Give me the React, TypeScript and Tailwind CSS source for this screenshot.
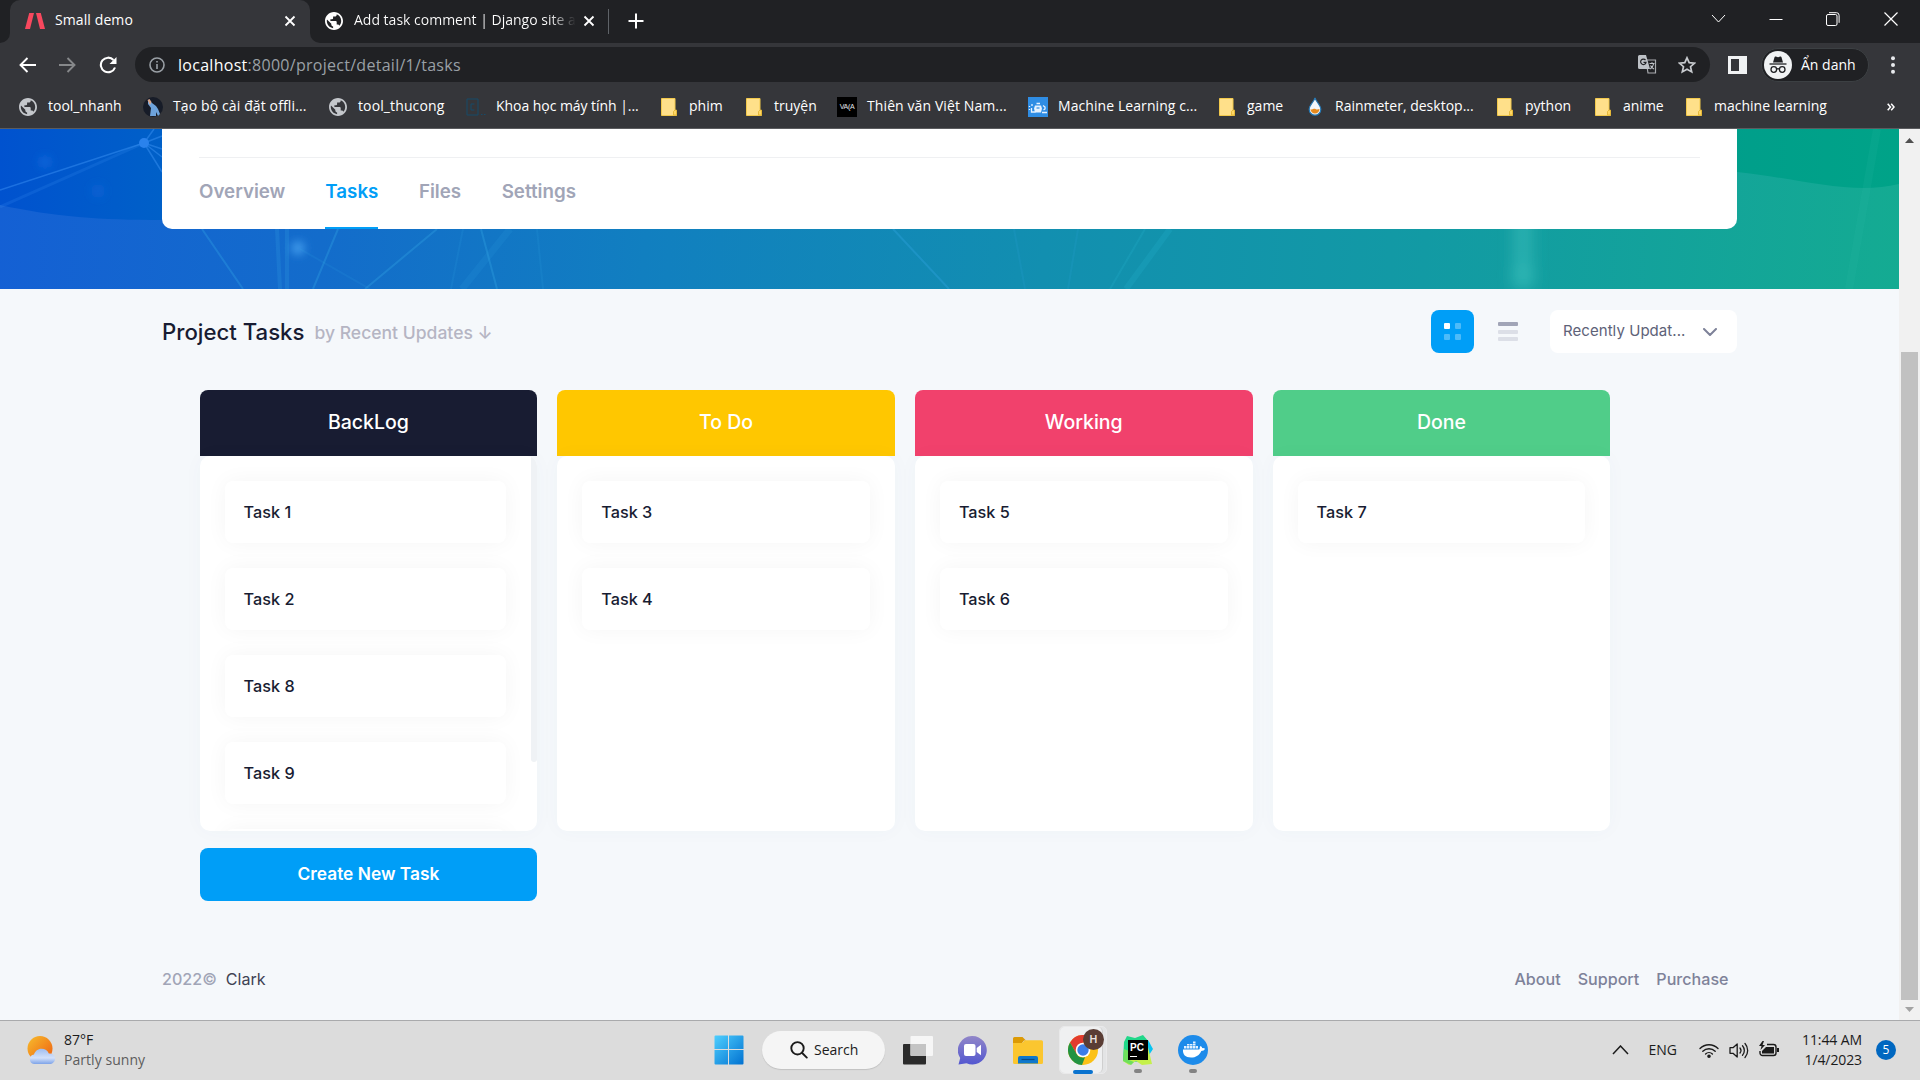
import React from "react";

const UI = "font-['Open_Sans','Noto_Sans',sans-serif]";

/* ---------- favicons ---------- */

const Globe = ({ color }: { color: string }) => (
  <svg width="18" height="18" viewBox="2 2 20 20">
    <path
      d="M12 2C6.480 2 2 6.480 2 12s4.480 10 10 10 10-4.480 10-10S17.520 2 12 2zm-1 17.930c-3.950-.49-7-3.850-7-7.930 0-.62.080-1.210.210-1.790L9 15v1c0 1.100.9 2 2 2v1.930zm6.900-2.540c-.26-.81-1-1.390-1.900-1.390h-1v-3c0-.55-.45-1-1-1H8v-2h2c.55 0 1-.45 1-1V7h2c1.100 0 2-.9 2-2v-.41c2.930 1.190 5 4.060 5 7.410 0 2.080-.8 3.970-2.100 5.390z"
      fill={color}
    />
  </svg>
);

const Folder = () => (
  <svg width="18" height="20" viewBox="0 0 18 20">
    <path d="M1.500 1.500h13.500v12h1.500v5h-15z" fill="#ffe08a" stroke="#f2c94c" />
    <path d="M13.500 18v-3.500l1.500-1.500h1.500v5z" fill="#ffd766" stroke="#e0b12f" strokeWidth=".8" />
  </svg>
);

const Person = () => (
  <svg width="20" height="20" viewBox="0 0 20 20">
    <rect width="20" height="20" rx="10" fill="#171c28" />
    <path d="M5 4l2 0 2 2 4 3 2 3 2 5-2 2-2-4v4H7l1-8-3-4z" fill="#6ea3dc" />
    <path d="M4.500 3l2-1 2 3-1.500 3z" fill="#d9a78c" />
  </svg>
);

const Computer = () => (
  <svg width="20" height="20" viewBox="0 0 20 20" fill="none" stroke="#174a68">
    <path d="M1 2h11v16H1zM8.500 7H5v6h3.500" />
    <path d="M15 17.500h1.500M18 17.500h1.500" />
  </svg>
);

const Vaca = () => (
  <span className="flex size-5 items-center justify-center bg-black font-['Liberation_Sans',sans-serif] text-[7px] tracking-tighter text-gray-200">
    VA(A
  </span>
);

const Learning = () => (
  <svg width="20" height="20" viewBox="0 0 20 20">
    <rect width="20" height="20" fill="#2f8de4" />
    <path d="M1.500 9v1M1.500 12v1M4 7v2M3.500 11v4h4M8.500 6.500h3.500M15 8.500l2 1.500v2l-1.500 1M14 15.500h5" stroke="#e6f2ff" strokeWidth="1.300" fill="none" />
    <path d="M7 8.500h6l1 3-1 4H7l-1-4z" fill="#e6f2ff" />
    <path d="M8.500 11h3" stroke="#2f8de4" strokeWidth="1.200" />
  </svg>
);

const Drop = () => (
  <svg width="14" height="19" viewBox="0 0 14 19">
    <path d="M7 .8c1 4 5.800 7.200 5.800 11.600a5.800 5.800 0 0 1-11.600 0C1.200 8 6 4.800 7 .8z" fill="#f3f7fb" stroke="#2477b3" strokeWidth="1.200" />
    <path d="M2.500 12c2 1.500 3-1 5 0s2.500.3 4 0a4.500 4.500 0 0 1-9 0z" fill="#e68a1e" />
  </svg>
);

/* ---------- browser chrome ---------- */

const CloseX = () => (
  <svg width="12" height="12" viewBox="0 0 12 12" stroke="#fff" strokeWidth="1.800">
    <path d="M1.500 1.500l9 9M10.500 1.500l-9 9" />
  </svg>
);

function TabStrip() {
  return (
    <div className="flex h-[43px] bg-[#202124]">
      <div className="flex w-2.5 items-end bg-[#35363a]">
        <div className="h-full w-2.5 rounded-br-[10px] bg-[#202124]" />
      </div>
      <div className="flex w-[300px] items-center rounded-t-[10px] bg-[#35363a] pr-3.5 pb-px pl-[15px]">
        <svg width="20" height="16" viewBox="0 0 20 16" fill="#f8485e">
          <path d="M4.200 0H9L5 16H0z" />
          <path d="M11 0h4.800L20 16h-5z" />
        </svg>
        <span className="-mt-0.5 ml-[10px] text-sm tracking-[0.1px] text-white">Small demo</span>
        <span className="ml-auto">
          <CloseX />
        </span>
      </div>
      <div className="bg-[#35363a]">
        <div className="h-[43px] w-2.5 rounded-bl-[10px] bg-[#202124]" />
      </div>
      <div className="flex w-[289px] items-center pb-px pl-[5px]">
        <Globe color="#fff" />
        <div className="-mt-0.5 ml-[11px] w-[222px] overflow-hidden bg-linear-to-r from-white from-88% to-transparent to-100% bg-clip-text text-sm whitespace-nowrap text-transparent">
          Add task comment | Django site admin
        </div>
        <span className="ml-[7px]">
          <CloseX />
        </span>
      </div>
      <div className="mt-[9px] -ml-px h-[25px] w-px bg-[#5f6368]" />
      <svg className="mt-[13px] ml-[19px]" width="16" height="16" viewBox="0 0 16 16" stroke="#fff" strokeWidth="2">
        <path d="M8 .5v15M.5 8h15" />
      </svg>
      <div className="mr-[21px] ml-auto flex h-[37px] items-center gap-[43px] text-white">
        <svg width="15" height="15" viewBox="0 0 15 15" fill="none" stroke="currentColor">
          <path d="M1 4l6.500 7L14 4" />
        </svg>
        <svg width="14" height="14" viewBox="0 0 14 14" stroke="currentColor">
          <path d="M.5 7.500h13" />
        </svg>
        <svg width="14" height="14" viewBox="0 0 14 14" fill="none" stroke="currentColor">
          <rect x=".5" y="2.500" width="10.500" height="11" rx="1.500" />
          <path d="M3 .7h7.500a2.600 2.600 0 0 1 2.600 2.600v7.500" />
        </svg>
        <svg width="16" height="16" viewBox="0 0 16 16" stroke="currentColor" strokeWidth="1.200">
          <path d="M1.500 1.500l13 13M14.500 1.500l-13 13" />
        </svg>
      </div>
    </div>
  );
}

function Toolbar() {
  return (
    <div className="flex h-[43px] items-center bg-[#35363a] pl-[19px]">
      <svg width="17" height="16" viewBox="0 0 17 16" fill="none" stroke="#fff" strokeWidth="1.900">
        <path d="M17 8H1.500M8.500 1L1.500 8l7 7" />
      </svg>
      <svg className="ml-[23px]" width="17" height="16" viewBox="0 0 17 16" fill="none" stroke="#86888a" strokeWidth="1.900">
        <path d="M0 8h15.500M8.500 1l7 7-7 7" />
      </svg>
      <svg className="ml-[23px]" width="18" height="18" viewBox="0 0 18 18" fill="none" stroke="#fff" strokeWidth="2.100">
        <path d="M16 11.500A7.300 7.300 0 1 1 14.500 4" />
        <path d="M17.500 1v7h-7z" fill="#fff" stroke="none" />
      </svg>
      <div className="ml-[18px] flex h-[35px] w-[1575px] items-center rounded-full bg-[#202124] pr-3.5 pl-[14px]">
        <svg width="16" height="16" viewBox="0 0 16 16" fill="none" stroke="#9aa0a6" strokeWidth="1.600">
          <circle cx="8" cy="8" r="7" />
          <path d="M8 7v5M8 4v1.600" />
        </svg>
        <span className="ml-[13px] text-[16px] tracking-[0.28px] text-[#9aa0a6]">
          <span className="text-white">localhost</span>:8000/project/detail/1/tasks
        </span>
        <div className="ml-auto flex items-center gap-[21px]">
          <svg width="19" height="19" viewBox="0 0 19 19">
            <path d="M8 5h9.500v13H10z" fill="none" stroke="#a9acb0" strokeWidth="1.200" />
            <path d="M1.500 0H8l4 14H1.500A1.500 1.500 0 0 1 0 12.500v-11A1.500 1.500 0 0 1 1.500 0z" fill="#bdc1c6" />
            <path d="M7.500 5.200A2.700 2.700 0 1 0 8 7.300H5.500" fill="none" stroke="#202124" strokeWidth="1.200" />
            <path d="M11.500 8.500h5M14 7.300v1.200M15.700 8.500c-.4 2.500-2 4.500-3.500 5.500M12.500 10.500c.8 1.600 2 2.800 3.500 3.500" fill="none" stroke="#bdc1c6" strokeWidth="1.100" />
          </svg>
          <svg width="18" height="18" viewBox="0 0 18 18" fill="none" stroke="#c8cbcf" strokeWidth="1.700">
            <path d="M9 1.800l2.200 4.900 5.300.5-4 3.500 1.200 5.200L9 13.200l-4.700 2.700 1.200-5.200-4-3.500 5.300-.5z" />
          </svg>
        </div>
      </div>
      <svg className="ml-[18px]" width="19" height="18" viewBox="0 0 19 18">
        <path d="M0 0h19v18H0zM3 3v12h8V3z" fill="#f1f3f4" fillRule="evenodd" />
      </svg>
      <div className="ml-[14px] flex h-[34px] w-[108px] items-center rounded-full border border-[#3c4043] bg-[#202124] pl-0.5">
        <svg width="28" height="28" viewBox="0 0 28 28">
          <circle cx="14" cy="14" r="14" fill="#f1f3f4" />
          <path d="M9 11.500l1.500-5.300c.2-.6.700-.8 1.300-.6l2.200.6 2.200-.6c.6-.2 1.100 0 1.300.6l1.500 5.300z" fill="#202124" />
          <path d="M5.500 13h17" stroke="#202124" strokeWidth="1.300" />
          <g fill="none" stroke="#202124" strokeWidth="1.300">
            <circle cx="9.800" cy="18.500" r="2.800" />
            <circle cx="18.200" cy="18.500" r="2.800" />
            <path d="M12.600 18.200q1.400-1 2.800 0" />
          </g>
        </svg>
        <span className="ml-[9px] text-sm text-white">Ẩn danh</span>
      </div>
      <svg className="ml-[22px]" width="4" height="18" viewBox="0 0 4 18" fill="#e8eaed">
        <circle cx="2" cy="2.300" r="2" />
        <circle cx="2" cy="9" r="2" />
        <circle cx="2" cy="15.700" r="2" />
      </svg>
    </div>
  );
}

const bookmarks: { label: string; icon: React.ReactNode; width: string }[] = [
  { label: "tool_nhanh", icon: <Globe color="#c4c7cb" />, width: "w-[125px]" },
  { label: "Tạo bộ cài đặt offli...", icon: <Person />, width: "w-[185px] tracking-[0.12px]" },
  { label: "tool_thucong", icon: <Globe color="#c4c7cb" />, width: "w-[138px] tracking-[0.12px]" },
  { label: "Khoa học máy tính |...", icon: <Computer />, width: "w-[193px] -tracking-[0.05px]" },
  { label: "phim", icon: <Folder />, width: "w-[85px]" },
  { label: "truyện", icon: <Folder />, width: "w-[93px]" },
  { label: "Thiên văn Việt Nam...", icon: <Vaca />, width: "w-[191px] tracking-[0.1px]" },
  { label: "Machine Learning c...", icon: <Learning />, width: "w-[189px] tracking-[0.08px]" },
  { label: "game", icon: <Folder />, width: "w-[88px]" },
  { label: "Rainmeter, desktop...", icon: <Drop />, width: "w-[190px]" },
  { label: "python", icon: <Folder />, width: "w-[98px]" },
  { label: "anime", icon: <Folder />, width: "w-[91px]" },
  { label: "machine learning", icon: <Folder />, width: "w-[150px]" },
];

function BookmarksBar() {
  return (
    <div className="flex h-[43px] items-center border-b border-[#5b5c5f] bg-[#35363a] pb-px pl-[18px] text-sm text-white">
      {bookmarks.map((b) => (
        <div key={b.label} className={`${b.width} flex shrink-0 items-center whitespace-nowrap`}>
          <span className="flex w-5 justify-center">{b.icon}</span>
          <span className="-mt-0.5 ml-[10px]">{b.label}</span>
        </div>
      ))}
      <svg className="mr-[25px] ml-auto" width="8" height="8" viewBox="0 0 8 8" fill="none" stroke="#fff" strokeWidth="1.500">
        <path d="M.7.700L3.500 4 .7 7.300M4.200.700L7 4 4.200 7.300" />
      </svg>
    </div>
  );
}

/* ---------- page ---------- */

const BannerArt = () => (
  <svg className="absolute inset-0" width="1899" height="160" viewBox="0 0 1899 160" fill="none">
    <defs>
      <linearGradient id="top" x1="0" x2="1899" y1="0" y2="0" gradientUnits="userSpaceOnUse">
        <stop offset="0" stopColor="#0052cf" />
        <stop offset=".085" stopColor="#0060c8" />
        <stop offset=".75" stopColor="#00968f" />
        <stop offset="1" stopColor="#00a388" />
      </linearGradient>
      <linearGradient id="low" x1="0" x2="1899" y1="60" y2="160" gradientUnits="userSpaceOnUse">
        <stop offset="0" stopColor="#1460d4" />
        <stop offset=".17" stopColor="#136ccb" />
        <stop offset=".34" stopColor="#117fc0" />
        <stop offset=".55" stopColor="#128fb0" />
        <stop offset=".75" stopColor="#129aa4" />
        <stop offset="1" stopColor="#14ab92" />
      </linearGradient>
      <filter id="soft" x="-50%" y="-50%" width="200%" height="200%" filterUnits="objectBoundingBox">
        <feGaussianBlur stdDeviation="4" />
      </filter>
      <filter id="haze" x="1470" y="60" width="110" height="100" filterUnits="userSpaceOnUse">
        <feGaussianBlur stdDeviation="7" />
      </filter>
    </defs>
    <path d="M0 0h1899v160H0z" fill="url(#top)" />
    <path d="M0 76c55 12 100 15 162 15h1575V43c60 6 115 24 162 12v105H0z" fill="url(#low)" />
    <g stroke="#4aa0ff" strokeOpacity=".38" strokeWidth="1.500">
      <path d="M0 61L144 14M144 14l10-14M144 14l18-7M144 14l18 6M144 14l18 14M144 14l18 29" />
      <path d="M0 78L144 14" strokeOpacity=".15" strokeWidth="3" />
    </g>
    <circle cx="144" cy="14" r="5" fill="#2a82ec" />
    <g filter="url(#soft)">
      <circle cx="45" cy="33" r="6" fill="#1b74e6" fillOpacity=".55" />
      <circle cx="98" cy="62" r="7" fill="#1268dc" fillOpacity=".45" />
      <circle cx="298" cy="119" r="7" fill="#47a0ee" fillOpacity=".85" />
    </g>
    <g filter="url(#haze)">
      <path d="M1523 70v90" stroke="#3cc0bd" strokeOpacity=".5" strokeWidth="20" />
      <circle cx="1523" cy="146" r="12" fill="#3cc0bd" fillOpacity=".3" />
    </g>
    <g stroke="#35a8e6" strokeOpacity=".32" strokeWidth="2">
      <path d="M202 100l41 60M437 100l-72 60M338 100l-25 60" />
      <path d="M277 100l3 60M287 100v60" strokeOpacity=".2" strokeWidth="4" />
      <path d="M481 100l16 60M893 100l56 60" />
      <path d="M510 100l-48 60" strokeOpacity=".13" strokeWidth="7" />
      <path d="M1014 100l11 60M1078 100l-10 60M463 100l-12 60M537 100l6 60M300 120l70 40" strokeOpacity=".13" />
    </g>
    <g stroke="#22b0cc" strokeOpacity=".25">
      <path d="M1145 100l-35 60" strokeWidth="2" />
      <path d="M1170 100l-44 60" strokeWidth="6" />
      <path d="M1877 0l-28 160" strokeWidth="8" stroke="#3ac4b0" strokeOpacity=".1" />
    </g>
  </svg>
);

function ProjectHeader() {
  return (
    <div className="relative h-[160px] pl-[162px]">
      <BannerArt />
      <div className="relative h-[100px] w-[1575px] rounded-b-[10px] bg-white px-[37px] pt-7">
        <div className="flex h-[72px] border-t border-[#eff0f2] text-[18.750px] font-semibold text-[#a1a5b7]">
          <span className="flex items-center pb-0.5">Overview</span>
          <span className="ml-[40px] flex items-center border-b-2 border-[#009ef7] text-[#009ef7]">Tasks</span>
          <span className="ml-[40.500px] flex items-center pb-0.5">Files</span>
          <span className="ml-[40.500px] flex items-center pb-0.5">Settings</span>
        </div>
      </div>
    </div>
  );
}

function TitleRow() {
  return (
    <div className="mt-[21px] flex h-[43px] items-center">
      <h2 className="text-[22.200px] font-medium text-[#181c32]">Project Tasks</h2>
      <span className="mt-[3px] ml-[10px] text-[17.550px] font-medium text-[#b5b5c3]">by Recent Updates ↓</span>
      <div className="ml-auto flex size-[43px] items-center justify-center rounded-[8px] bg-[#009ef7]">
        <div className="grid grid-cols-2 gap-[5px]">
          <i className="size-1.5 rounded-[1px] bg-white" />
          <i className="size-1.5 rounded-[1px] bg-white/30" />
          <i className="size-1.5 rounded-[1px] bg-white/30" />
          <i className="size-1.5 rounded-[1px] bg-white/30" />
        </div>
      </div>
      <div className="ml-6 flex w-5 flex-col gap-[3.5px]">
        <i className="h-1 rounded-[1px] bg-[#a1a5b7]" />
        <i className="h-1 rounded-[1px] bg-[#dcdfe7]" />
        <i className="h-1 rounded-[1px] bg-[#dcdfe7]" />
      </div>
      <div className="ml-8 flex h-[43px] w-[187px] items-center rounded-[8px] bg-white pr-5 pl-[13px] text-[15px] text-[#5e6278]">
        <span className="-mt-px tracking-[0.06px]">Recently Updat...</span>
        <svg className="ml-auto" width="14" height="8" viewBox="0 0 14 8" fill="none" stroke="#7e8299" strokeWidth="2" strokeLinecap="round" strokeLinejoin="round">
          <path d="M1 1l6 6 6-6" />
        </svg>
      </div>
    </div>
  );
}

const columns = [
  { title: "BackLog", color: "bg-[#181c32]", tasks: ["Task 1", "Task 2", "Task 8", "Task 9"], scroll: true },
  { title: "To Do", color: "bg-[#ffc700]", tasks: ["Task 3", "Task 4"], scroll: false },
  { title: "Working", color: "bg-[#f1416c]", tasks: ["Task 5", "Task 6"], scroll: false },
  { title: "Done", color: "bg-[#50cd89]", tasks: ["Task 7"], scroll: false },
];

const TASK_CARD =
  "flex h-[62px] shrink-0 items-center rounded-[8px] bg-white pl-[19px] text-[16.25px] font-medium text-[#181c32] shadow-[0_0_22px_0_rgba(0,0,0,0.045)]";

function Board() {
  return (
    <div className="mt-[37px] ml-[37.600px] grid w-[1410.700px] grid-cols-4 gap-x-5">
      {columns.map((c) => (
        <section key={c.title}>
          <h3 className={`${c.color} flex h-[66px] items-center justify-center rounded-t-[8px] text-[19.500px] font-medium text-white`}>
            {c.title}
          </h3>
          <div className="flex h-[375px] overflow-hidden rounded-[10px] bg-white shadow-[0_0_20px_0_rgba(76,87,125,0.03)]">
            <div className={`flex grow flex-col gap-[25px] px-[25px] pt-[25px]`}>
              {c.tasks.map((t) => (
                <div key={t} className={TASK_CARD}>
                  {t}
                </div>
              ))}
              {c.scroll && <div className={TASK_CARD} />}
            </div>
            {c.scroll && <div className="h-[306px] w-1.5 shrink-0 rounded-b-[3px] bg-[#eff2f5]" />}
          </div>
        </section>
      ))}
      <button className="mt-[17px] h-[53px] rounded-[8px] bg-[#009ef7] pb-px text-[17.350px] font-semibold text-white">
        Create New Task
      </button>
    </div>
  );
}

function Footer() {
  return (
    <footer className="mt-auto mb-[31px] flex h-5 items-center text-[16.100px] font-medium text-[#7e8299]">
      <span className="text-[#a1a5b7]">2022©</span>
      <span className="ml-[9px] font-normal text-[#3f4254]">Clark</span>
      <span className="ml-auto">About</span>
      <span className="ml-[17px]">Support</span>
      <span className="mr-[8.500px] ml-[17px]">Purchase</span>
    </footer>
  );
}

function PageScrollbar() {
  return (
    <div className="flex w-[21px] flex-col items-center bg-[#f1f1f1]">
      <svg className="mt-[9px]" width="9" height="5" viewBox="0 0 9 5" fill="#505050">
        <path d="M4.500 0L9 5H0z" />
      </svg>
      <div className="mt-[209px] h-[648px] w-[17px] bg-[#c1c1c1]" />
      <svg className="mt-[7px]" width="9" height="5" viewBox="0 0 9 5" fill="#a3a3a3">
        <path d="M4.500 5L9 0H0z" />
      </svg>
    </div>
  );
}

/* ---------- taskbar ---------- */

const Weather = () => (
  <svg width="28" height="28" viewBox="0 0 28 28">
    <defs>
      <linearGradient id="sun" x1="0" y1="0" x2="1" y2="1">
        <stop offset="0" stopColor="#f7bd2d" />
        <stop offset="1" stopColor="#ee5d10" />
      </linearGradient>
      <linearGradient id="cloud" x1="0" y1="0" x2="0" y2="1">
        <stop offset="0" stopColor="#9fbdf0" />
        <stop offset=".6" stopColor="#d3e1fa" />
        <stop offset="1" stopColor="#7ea3e8" />
      </linearGradient>
    </defs>
    <circle cx="13" cy="12.500" r="12.500" fill="url(#sun)" />
    <path d="M7 28a4.800 4.800 0 0 1 0-9.500C8 15 11 12.700 14.500 12.700s6.300 2 7.300 4.800c3.500-.2 6.200 2 6.200 5.200S25.500 28 22.500 28z" fill="url(#cloud)" />
  </svg>
);

const WindowsLogo = () => (
  <svg width="30" height="30" viewBox="0 0 30 30">
    <defs>
      <linearGradient id="win" x1="0" y1="0" x2="30" y2="30" gradientUnits="userSpaceOnUse">
        <stop offset="0" stopColor="#4fd0ff" />
        <stop offset="1" stopColor="#0070d0" />
      </linearGradient>
    </defs>
    <path d="M1.500.5H14V14H.5V1.500a1 1 0 0 1 1-1zM15 .5h13.500a1 1 0 0 1 1 1V14H15zM.5 15H14v14.500H1.500a1 1 0 0 1-1-1zM15 15h14.500v13.500a1 1 0 0 1-1 1H15z" fill="url(#win)" />
  </svg>
);

const TaskView = () => (
  <svg width="30" height="29" viewBox="0 0 30 29">
    <rect x="0" y="8" width="23" height="20.500" rx="1" fill="#2b2b2b" />
    <rect x="7.500" y="0" width="22.500" height="20" rx="1" fill="#f6f6f6" />
    <path d="M7.500 8H23v12H8.500a1 1 0 0 1-1-1z" fill="#c4c4c4" />
  </svg>
);

const Chat = () => (
  <svg width="29" height="29" viewBox="0 0 29 29">
    <defs>
      <linearGradient id="chat" x1="0" y1="0" x2="0" y2="1">
        <stop offset="0" stopColor="#9186c8" />
        <stop offset="1" stopColor="#5357d0" />
      </linearGradient>
    </defs>
    <path d="M14.500 0a14.300 14.300 0 1 1-6 27.300L.5 28.500 2.200 22A14.300 14.300 0 0 1 14.500 0z" fill="url(#chat)" />
    <rect x="6" y="8" width="11.500" height="12" rx="2" fill="#fff" />
    <path d="M18.700 12l4.300-3.200v10.400L18.700 16z" fill="#fff" />
  </svg>
);

const Explorer = () => (
  <svg width="30" height="27" viewBox="0 0 30 27">
    <path d="M0 1.500A1.500 1.500 0 0 1 1.500 0h8L13 3.500h-2L9 6H0z" fill="#dc9a06" />
    <path d="M0 6h9l3-2.800h16.500A1.500 1.500 0 0 1 30 4.700v20.800a1.500 1.500 0 0 1-1.500 1.500h-27A1.500 1.500 0 0 1 0 25.500z" fill="#fbc62f" />
    <path d="M5 26.500V21a2 2 0 0 1 2-2h16a2 2 0 0 1 2 2v5.500z" fill="#0f78cc" />
    <path d="M8.500 22.500h13" stroke="#0a4b86" strokeWidth="1.200" />
  </svg>
);

const Chrome = () => (
  <svg width="30" height="30" viewBox="0 0 30 30">
    <circle cx="15" cy="15" r="15" fill="#fbc116" />
    <path d="M2 7.500A15 15 0 0 1 28 7.500H15L8.500 18.700z" fill="#e33b2e" />
    <path d="M2 7.500l6.500 11.200A7.500 7.500 0 0 0 17 22.200L14 30A15 15 0 0 1 2 7.500z" fill="#229342" />
    <circle cx="15" cy="15" r="7.300" fill="#fff" />
    <circle cx="15" cy="15" r="5.700" fill="#3b7de8" />
  </svg>
);

const PyCharm = () => (
  <div className="relative flex size-[30px] items-center justify-center">
    <svg className="absolute inset-0" width="30" height="30" viewBox="0 0 30 30">
      <path d="M1 7l3-6 8 2 8-3 6 7 3 8-10 12L0 26z" fill="#21d789" />
      <path d="M25 5l5 9-4 6-3-6z" fill="#07c3f2" />
      <path d="M0 26l6-8 19-6 4 17-10 1-6-4-7 4z" fill="#c5f04a" />
      <path d="M0 26l1-12 5 2v9l5 2-3 3z" fill="#6fe05c" />
    </svg>
    <div className="relative flex size-5 flex-col bg-black pt-[3px] pl-[2px] font-['Liberation_Sans',sans-serif] text-[10px] leading-[9px] font-bold text-white">
      PC
      <i className="mt-[4px] h-px w-[7px] bg-white" />
    </div>
  </div>
);

const Docker = () => (
  <svg width="30" height="30" viewBox="0 0 30 30">
    <circle cx="15" cy="15" r="15" fill="#1d8bea" />
    <path d="M5 14.500h15.500c1 0 1.500-.5 1.300-2.500l.8-1c1 .6 1.500 1.300 1.600 2.200 1-.2 2 0 2.800.5-.6 1.600-2 2.200-3.700 2.200C21.500 20 18 22.500 13 22.500c-5.500 0-8.500-3-8-8z" fill="#fff" />
    <path d="M6 11h2.500v2.500H6zM9 11h2.500v2.500H9zM12 11h2.500v2.500H12zM15 11h2.500v2.500H15zM9 9h2.500v1.600H9zM12 9h2.500v1.600H12zM15 9h2.500v1.600H15zM15 6.600h2.500v1.800H15zM18 11h2v2.500h-2z" fill="#e4f1ff" />
  </svg>
);

const Dot = () => <i className="absolute -bottom-[8px] left-[11px] h-1 w-2 rounded-full bg-[#838383]" />;

function Taskbar() {
  return (
    <div className="flex h-[60px] items-center border-t border-[#a9aaac] bg-[#dcdcdc] pb-px pl-[27px] text-sm text-[#1b1b1b]">
      <Weather />
      <div className="-mt-px ml-[9px] w-[650px] leading-5">
        <div>87°F</div>
        <div className="tracking-[0.05px] text-[#5d5d5d]">Partly sunny</div>
      </div>
      <WindowsLogo />
      <div className="ml-[18px] flex h-[38px] w-[123px] items-center rounded-full bg-[#f5f5f5] pl-[28px] shadow-[0_1px_1px_rgba(0,0,0,0.12)]">
        <svg width="18" height="18" viewBox="0 0 18 18" fill="none" stroke="#1b1b1b" strokeWidth="1.900" strokeLinecap="round">
          <circle cx="7.500" cy="7.300" r="6.200" />
          <path d="M12.200 12l4.600 4.600" />
        </svg>
        <span className="ml-1.5">Search</span>
      </div>
      <span className="ml-[18px]"><TaskView /></span>
      <span className="ml-[25px]"><Chat /></span>
      <span className="ml-[26px]"><Explorer /></span>
      <div className="ml-4 flex h-12 w-12 rounded-[5px] border border-[#e9e9ea] bg-[#e3e4e5]">
        <div className="relative flex h-full w-[43px] items-center justify-center rounded-[5px] border-r border-[#cfcfcf] bg-[#eff0f1]">
          <span className="ml-[4px]"><Chrome /></span>
          <span className="absolute top-0.5 left-[23px] flex size-[21px] items-center justify-center rounded-full bg-[#5a3d35] font-['Roboto',sans-serif] text-[11px] font-medium text-[#ece4e1]">
            H
          </span>
          <i className="absolute -bottom-px left-[13px] h-1 w-5 rounded-full bg-[#0a73cf]" />
        </div>
      </div>
      <span className="relative ml-4"><PyCharm /><Dot /></span>
      <span className="relative ml-[25px]"><Docker /><Dot /></span>
      <div className="mr-6 ml-auto flex items-center">
        <svg width="17" height="10" viewBox="0 0 17 10" fill="none" stroke="#1b1b1b" strokeWidth="1.500">
          <path d="M1 9l7.500-8L16 9" />
        </svg>
        <span className="ml-5">ENG</span>
        <svg className="ml-[22px]" width="20" height="15" viewBox="0 0 20 15" fill="none" stroke="#1b1b1b" strokeWidth="1.400" strokeLinecap="round">
          <path d="M1 5.500a12.700 12.700 0 0 1 18 0M3.800 8.300a8.800 8.800 0 0 1 12.400 0M6.600 11a4.900 4.900 0 0 1 6.800 0" />
          <circle cx="10" cy="13.200" r="1.100" fill="#1b1b1b" />
        </svg>
        <svg className="ml-2.5" width="20" height="17" viewBox="0 0 20 17" fill="none" stroke="#1b1b1b" strokeWidth="1.300" strokeLinecap="round" strokeLinejoin="round">
          <path d="M1 5.700h3L8.200 2v13L4 11.300H1z" />
          <path d="M11 6a4 4 0 0 1 0 5M13.500 3.700a7.200 7.200 0 0 1 0 9.600M16 1.500a10.500 10.500 0 0 1 0 14" />
        </svg>
        <svg className="-mt-0.5 ml-2.5" width="20" height="16" viewBox="0 0 20 16" fill="none" stroke="#1b1b1b" strokeWidth="1.400">
          <path d="M8 3.500h6.500a2.500 2.500 0 0 1 2.500 2.500v6a2.500 2.500 0 0 1-2.500 2.500h-11A2.500 2.500 0 0 1 1 12v-2" />
          <path d="M3 12.500V10l4-4h8v6.500zM18 7h2v4h-2zM3.500 0L0 5h2.500L1.500 9 6 4H3.500L5 0z" fill="#1b1b1b" stroke="none" />
        </svg>
        <div className="-mt-px ml-[23px] w-[60px] text-right leading-5 tracking-[-0.1px] whitespace-nowrap">
          <div>11:44 AM</div>
          <div>1/4/2023</div>
        </div>
        <span className="ml-[14px] flex size-5 items-center justify-center rounded-full bg-[#0067c0] text-xs text-white">5</span>
      </div>
    </div>
  );
}

export default function App() {
  return (
    <div className={`${UI} flex h-[1080px] w-[1920px] flex-col overflow-hidden`}>
      <TabStrip />
      <Toolbar />
      <BookmarksBar />
      <div className="flex h-[891px]">
        <main className="flex w-[1899px] flex-col bg-[#f5f8fb] font-['Inter',sans-serif]">
          <ProjectHeader />
          <div className="flex grow flex-col pr-[162px] pl-[162px]">
            <TitleRow />
            <Board />
            <Footer />
          </div>
        </main>
        <PageScrollbar />
      </div>
      <Taskbar />
    </div>
  );
}
